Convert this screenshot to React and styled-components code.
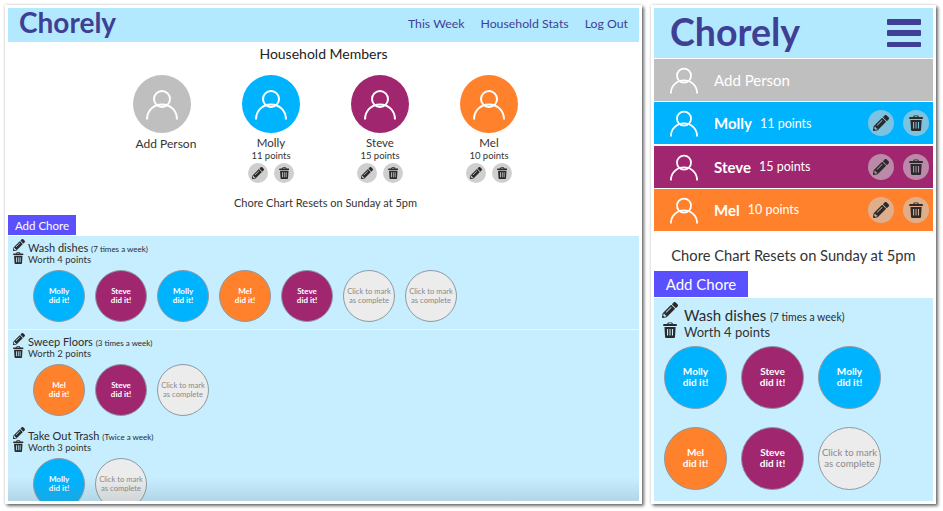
import React from "react";
import styled, { createGlobalStyle } from "styled-components";
import { FaPencilAlt } from "react-icons/fa";

const font = `"Lato", "Open Sans", sans-serif`;
const colors = { Molly: "#00b3ff", Steve: "#a02670", Mel: "#ff812b", add: "#bfbfbf" };
const windowShadow = `0 0 0 3px #fff, 2px 2px 3px 3px rgba(0, 0, 0, 0.55), 0 0 3px 3px rgba(0, 0, 0, 0.2)`;

const GlobalStyle = createGlobalStyle`
    html, body {
        margin: 0;
        background: #fff;
        font-family: ${font};
        color: #333;
    }
`;

const Page = styled.div`
    width: 943px;
    height: 511px;
    box-sizing: border-box;
    padding: 8px 10px 0 8px;
    display: flex;
    justify-content: space-between;
    align-items: flex-start;
    overflow: hidden;
`;

const Desktop = styled.div`
    position: relative;
    width: 631px;
    height: 493px;
    display: flex;
    flex-direction: column;
    background: #fff;
    box-shadow: ${windowShadow};
`;

const Fade = styled.div`
    position: absolute;
    left: 0;
    right: 0;
    bottom: 0;
    height: 24px;
    background: linear-gradient(rgba(110, 130, 140, 0), rgba(110, 130, 140, 0.22));
`;

const Mobile = styled.div`
    width: 279px;
    height: 493px;
    display: flex;
    flex-direction: column;
    background: #fff;
    box-shadow: ${windowShadow};
`;

const Header = styled.header`
    height: ${p => (p.$big ? 50 : 34)}px;
    flex: none;
    box-sizing: border-box;
    padding: 0 ${p => (p.$big ? 12 : 11)}px 0 ${p => (p.$big ? 16 : 11)}px;
    background: #b3e9ff;
    display: flex;
    align-items: center;
    justify-content: space-between;
`;

const Logo = styled.div`
    font-size: ${p => (p.$big ? 37.5 : 28)}px;
    line-height: ${p => (p.$big ? 44 : 29)}px;
    font-weight: 700;
    color: #3f3f96;
    padding-bottom: ${p => (p.$big ? 2 : 5)}px;
`;

const Nav = styled.nav`
    display: flex;
    gap: 16px;
    font-size: 12.3px;
    color: #3f3f96;
    padding-bottom: 4px;
`;

const Burger = styled.div`
    width: 34px;
    height: 28px;
    display: flex;
    flex-direction: column;
    justify-content: space-between;
    span {
        height: 5.5px;
        background: #3f3f96;
        border-radius: 1px;
    }
`;

const Title = styled.h2`
    margin: 0;
    padding-top: 4px;
    font-size: 14px;
    line-height: 16px;
    font-weight: 400;
    text-align: center;
    color: #222;
`;

const Members = styled.div`
    display: flex;
    justify-content: center;
    padding: 13px 0 0 4px;
    height: 115px;
`;

const Member = styled.div`
    width: 109px;
    display: flex;
    flex-direction: column;
    align-items: center;
`;

const Avatar = styled.div`
    width: 58px;
    height: 58px;
    border-radius: 50%;
    background: ${p => p.$color};
    margin-bottom: 3px;
    svg {
        display: block;
    }
`;

const Name = styled.div`
    font-size: ${p => (p.$add ? 12 : 11.5)}px;
    line-height: 14px;
    margin-top: ${p => (p.$add ? 1 : 0)}px;
    margin-left: ${p => (p.$add ? 8 : 0)}px;
    color: #333;
`;

const Points = styled.div`
    font-size: 9.5px;
    line-height: 11px;
`;

const Actions = styled.div`
    display: flex;
    gap: ${p => (p.$big ? 9 : 6)}px;
    margin: ${p => (p.$big ? "0 4px 0 auto" : "2px 0 0")};
`;

const ActionButton = styled.div`
    width: ${p => (p.$big ? 26 : 20)}px;
    height: ${p => (p.$big ? 26 : 20)}px;
    border-radius: 50%;
    background: ${p => (p.$big ? "rgba(205, 205, 205, 0.6)" : "#cfcfcf")};
    display: flex;
    align-items: center;
    justify-content: center;
    color: #2b2b2b;
    font-size: ${p => (p.$big ? 16 : 12)}px;
`;

const Resets = styled.div`
    text-align: center;
    font-size: ${p => (p.$big ? 14.7 : 11)}px;
    line-height: ${p => (p.$big ? 18 : 14)}px;
    padding-left: ${p => (p.$big ? 0 : 4)}px;
    margin-top: ${p => (p.$big ? 15 : 6)}px;
    color: #333;
`;

const AddChore = styled.div`
    width: ${p => (p.$big ? 94 : 68)}px;
    height: ${p => (p.$big ? 26 : 20)}px;
    margin-top: ${p => (p.$big ? 7 : 5)}px;
    margin-bottom: 1px;
    background: #5a50ff;
    color: #fff;
    font-size: ${p => (p.$big ? 15 : 11.5)}px;
    display: flex;
    align-items: center;
    justify-content: center;
`;

const ChoreList = styled.div`
    background: #c7eeff;
    flex: 1 1 0;
    min-height: 0;
    overflow: hidden;
`;

const Chore = styled.section`
    height: ${p => (p.$big ? "auto" : "94px")};
    box-sizing: border-box;
    padding: ${p => (p.$big ? "4px 8px 0" : "3px 5px 0")};
    border-bottom: ${p => (p.$divider ? "1px solid #e6f8ff" : "none")};
`;

const ChoreHead = styled.div`
    display: flex;
    gap: ${p => (p.$big ? 6 : 4)}px;
`;

const ChoreIcons = styled.div`
    width: ${p => (p.$big ? 16 : 11)}px;
    display: flex;
    flex-direction: column;
    align-items: center;
    color: #2b2b2b;
    font-size: ${p => (p.$big ? 16 : 12)}px;
    gap: ${p => (p.$big ? 4 : 1)}px;
    svg {
        display: block;
    }
`;

const ChoreText = styled.div`
    padding-top: ${p => (p.$big ? 5 : 4)}px;
`;

const ChoreName = styled.div`
    font-size: ${p => (p.$big ? 15 : 11)}px;
    line-height: ${p => (p.$big ? 17 : 10)}px;
    color: #2c2c2c;
    small {
        font-size: ${p => (p.$big ? 10.5 : 8)}px;
    }
`;

const Worth = styled.div`
    font-size: ${p => (p.$big ? 13 : 9.5)}px;
    line-height: ${p => (p.$big ? 13 : 11)}px;
    color: #333;
`;

const Marks = styled.div`
    display: flex;
    flex-wrap: wrap;
    gap: ${p => (p.$big ? "18px 14px" : "10px")};
    padding: ${p => (p.$big ? "7px 0 0 2px" : "5px 0 0 20px")};
`;

const Mark = styled.div`
    width: ${p => (p.$big ? 63 : 52)}px;
    height: ${p => (p.$big ? 63 : 52)}px;
    box-sizing: border-box;
    border-radius: 50%;
    border: 1px solid #8d9aa1;
    background: ${p => p.$color || "#ececec"};
    color: ${p => (p.$color ? "#fff" : "#8a8a8a")};
    font-weight: ${p => (p.$color ? 700 : 400)};
    font-size: ${p => (p.$color ? (p.$big ? 10 : 8) : p.$big ? 9.6 : 7.6)}px;
    line-height: ${p => (p.$big ? 11 : 9)}px;
    text-align: center;
    display: flex;
    align-items: center;
    justify-content: center;
`;

const Rows = styled.div`
    flex: none;
    padding-top: 1px;
    display: flex;
    flex-direction: column;
    gap: 1.3px;
`;

const Row = styled.div`
    height: 42px;
    background: ${p => p.$color};
    color: #fff;
    display: flex;
    align-items: center;
    padding-left: 16px;
    svg.person {
        width: 28px;
        height: 28px;
        margin-right: 16px;
    }
`;

const RowName = styled.span`
    font-size: 15px;
    font-weight: ${p => (p.$add ? 400 : 700)};
`;

const RowPoints = styled.span`
    font-size: 12.5px;
    margin-left: 8px;
`;

const Person = ({ size, className, stroke = 2 }) => (
    <svg className={className} width={size} height={size} viewBox={className ? "13 13 32 32" : "0 0 58 58"} fill="none" stroke="#fff" strokeWidth={stroke}>
        <circle cx="29" cy="24" r="8" />
        <path d="M14 44.5c0-9 6.5-15 15-15s15 6 15 15" />
    </svg>
);

// the lidded bin from the screenshot, taller than the packaged trash icons
const Trash = () => (
    <svg width="0.88em" height="1em" viewBox="0 0 14 16" fill="currentColor" fillRule="evenodd">
        <path d="M5 .4h4l1 1.6h3.2a.6.6 0 0 1 .6.6V4H.2V2.6a.6.6 0 0 1 .6-.6H4zM5.8 1.3 5.3 2h3.4l-.5-.7z" />
        <path d="M1.4 5h11.2l-.6 9.8a1.2 1.2 0 0 1-1.2 1.2H3.2A1.2 1.2 0 0 1 2 14.8zM4 7v6.6h1.1V7zM6.5 7v6.6h1V7zM8.9 7v6.6H10V7z" />
    </svg>
);

const members = [
    { name: "Molly", points: 11 },
    { name: "Steve", points: 15 },
    { name: "Mel", points: 10 },
];

const chores = [
    { name: "Wash dishes", freq: "(7 times a week)", worth: 4, marks: ["Molly", "Steve", "Molly", "Mel", "Steve", null, null] },
    { name: "Sweep Floors", freq: "(3 times a week)", worth: 2, marks: ["Mel", "Steve", null] },
    { name: "Take Out Trash", freq: "(Twice a week)", worth: 3, marks: ["Molly", null] },
];

const mobileChore = { ...chores[0], marks: ["Molly", "Steve", "Molly", "Mel", "Steve", null] };

const ChoreItem = ({ chore, big, divider }) => (
    <Chore $big={big} $divider={divider}>
        <ChoreHead $big={big}>
            <ChoreIcons $big={big}>
                <FaPencilAlt />
                <Trash />
            </ChoreIcons>
            <ChoreText $big={big}>
                <ChoreName $big={big}>
                    {chore.name} <small>{chore.freq}</small>
                </ChoreName>
                <Worth $big={big}>Worth {chore.worth} points</Worth>
            </ChoreText>
        </ChoreHead>
        <Marks $big={big}>
            {chore.marks.map((who, i) => (
                <Mark key={i} $big={big} $color={colors[who]}>
                    {who ? (
                        <span>
                            {who}
                            <br />
                            did it!
                        </span>
                    ) : (
                        <span>
                            Click to mark
                            <br />
                            as complete
                        </span>
                    )}
                </Mark>
            ))}
        </Marks>
    </Chore>
);

const EditButtons = ({ big }) => (
    <Actions $big={big}>
        <ActionButton $big={big}>
            <FaPencilAlt />
        </ActionButton>
        <ActionButton $big={big}>
            <Trash />
        </ActionButton>
    </Actions>
);

const App = () => (
    <Page>
        <GlobalStyle />
        <Desktop>
            <Header>
                <Logo>Chorely</Logo>
                <Nav>
                    <span>This Week</span>
                    <span>Household Stats</span>
                    <span>Log Out</span>
                </Nav>
            </Header>
            <Title>Household Members</Title>
            <Members>
                <Member>
                    <Avatar $color={colors.add}>
                        <Person size={58} />
                    </Avatar>
                    <Name $add>Add Person</Name>
                </Member>
                {members.map(m => (
                    <Member key={m.name}>
                        <Avatar $color={colors[m.name]}>
                            <Person size={58} />
                        </Avatar>
                        <Name>{m.name}</Name>
                        <Points>{m.points} points</Points>
                        <EditButtons />
                    </Member>
                ))}
            </Members>
            <Resets>Chore Chart Resets on Sunday at 5pm</Resets>
            <AddChore>Add Chore</AddChore>
            <ChoreList>
                {chores.map((c, i) => (
                    <ChoreItem key={c.name} chore={c} divider={i === 0} />
                ))}
            </ChoreList>
            <Fade />
        </Desktop>
        <Mobile>
            <Header $big>
                <Logo $big>Chorely</Logo>
                <Burger>
                    <span />
                    <span />
                    <span />
                </Burger>
            </Header>
            <Rows>
                <Row $color={colors.add}>
                    <Person className="person" />
                    <RowName $add>Add Person</RowName>
                </Row>
                {members.map(m => (
                    <Row key={m.name} $color={colors[m.name]}>
                        <Person className="person" />
                        <RowName>{m.name}</RowName>
                        <RowPoints>{m.points} points</RowPoints>
                        <EditButtons big />
                    </Row>
                ))}
            </Rows>
            <Resets $big>Chore Chart Resets on Sunday at 5pm</Resets>
            <AddChore $big>Add Chore</AddChore>
            <ChoreList>
                <ChoreItem chore={mobileChore} big />
            </ChoreList>
        </Mobile>
    </Page>
);

export default App;
